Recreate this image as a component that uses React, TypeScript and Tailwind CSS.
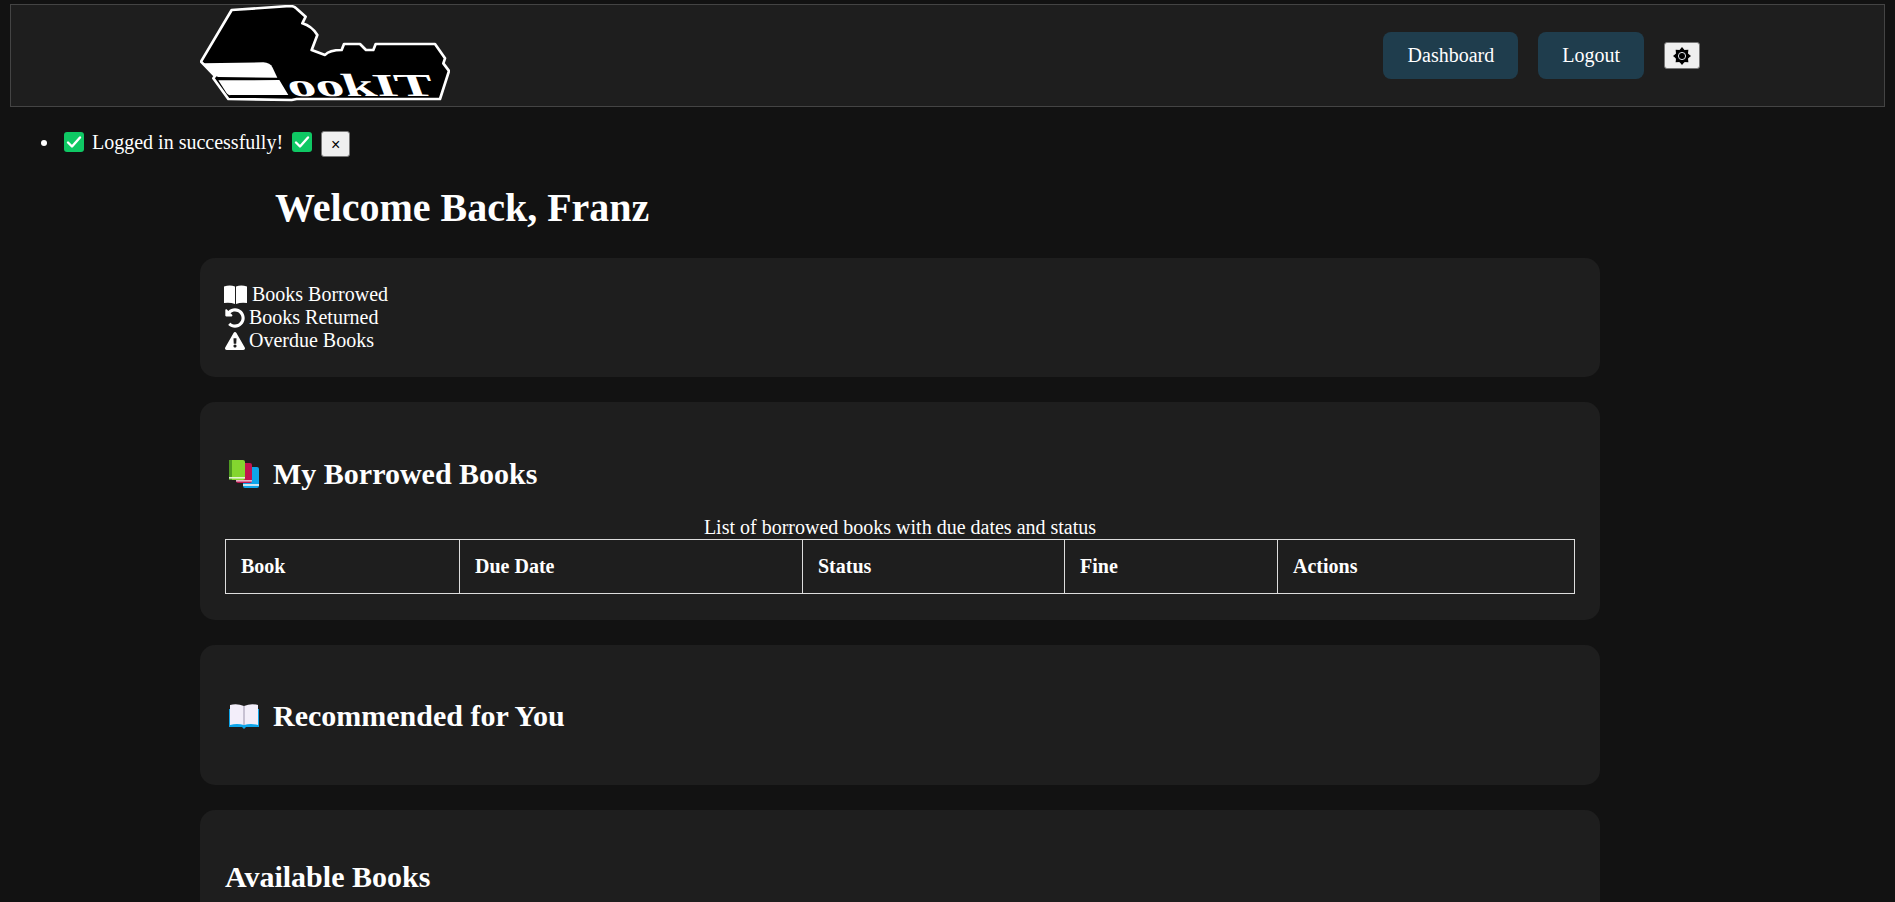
import { FaExclamationTriangle, FaUndoAlt } from 'react-icons/fa';

function CheckBadge() {
    return (
        <svg width="20" height="20" viewBox="0 0 20 20" className="shrink-0">
            <rect width="20" height="20" rx="3" fill="#0fc864" />
            <path d="M4 10.5l4 4 8-9" fill="none" stroke="#fff" strokeWidth="2.4" strokeLinecap="round" strokeLinejoin="round" />
        </svg>
    );
}

function Logo() {
    return (
        <svg width="250" height="97" viewBox="600 15 750 291" className="mb-[4px] shrink-0">
            <path
                d="M695 30L870 18Q882 18 890 26L917 50L907 70Q935 78 952 105L935 150L975 165Q988 150 1025 150L1032 132L1080 132L1098 150L1120 150L1127 132L1305 132L1335 175L1330 190L1347 213L1320 297L890 297L875 300L685 297L640 235L645 228L603 185Z"
                fill="#000"
                stroke="#fff"
                strokeWidth="8"
                strokeLinejoin="round"
            />
            <path d="M610 190L790 187Q810 188 818 203L832 233L655 231L640 226Z" fill="#fff" />
            <path d="M655 241L838 240L865 285L692 285Q685 287 680 280Z" fill="#fff" />
            <g transform="translate(872 288) skewX(20)">
                <text
                    x="0"
                    y="0"
                    fill="#fff"
                    fontFamily="'Liberation Serif', serif"
                    fontWeight="700"
                    fontSize="96"
                    textLength="440"
                    lengthAdjust="spacingAndGlyphs"
                >
                    ookIT
                </text>
            </g>
        </svg>
    );
}

function ThemeIcon() {
    const spikes = [0, 45, 90, 135, 180, 225, 270, 315];
    return (
        <svg width="18" height="18" viewBox="0 0 18 18">
            {spikes.map((angle) => (
                <path key={angle} d="M6.2 3.4L9 0L11.8 3.4Z" fill="#000" transform={`rotate(${angle} 9 9)`} />
            ))}
            <circle cx="9" cy="9" r="6.6" fill="#000" />
            <circle cx="9" cy="9" r="3.6" fill="#000" stroke="#dfe3ea" strokeWidth="1" />
        </svg>
    );
}

function BookIcon() {
    return (
        <svg width="23" height="19" viewBox="0 0 23 19" className="shrink-0">
            <path d="M0 1.5Q6-.5 11 1.5V19Q6 17 0 18Z" fill="#fff" />
            <path d="M23 1.5Q17-.5 12 1.5V19Q17 17 23 18Z" fill="#fff" />
        </svg>
    );
}

function BooksEmoji() {
    return (
        <svg width="30" height="28" viewBox="0 0 30 28" className="shrink-0">
            <rect x="14" y="7" width="16" height="21" rx="2" fill="#0ea5e9" />
            <rect x="14" y="24" width="16" height="2" fill="#cfe3ee" />
            <rect x="7" y="3" width="16" height="20" rx="2" fill="#c2134f" />
            <rect x="7" y="20" width="16" height="1.6" fill="#e5b7c8" />
            <rect x="0" y="0" width="16" height="20" rx="2" fill="#84d62f" />
            <rect x="0" y="0" width="3" height="20" fill="#4f9a22" />
            <rect x="0" y="17" width="16" height="1.6" fill="#e4f3d4" />
        </svg>
    );
}

function OpenBookEmoji() {
    return (
        <svg width="30" height="26" viewBox="0 0 30 26" className="shrink-0">
            <path d="M0 6h30v18H17l-2 2-2-2H0z" fill="#0ea5e9" />
            <path d="M1 2q7-2 14 1v19q-7-2-14 0z" fill="#f3eefa" />
            <path d="M29 2q-7-2-14 1v19q7-2 14 0z" fill="#f3eefa" />
            <path d="M15 3v19" stroke="#b9b2c6" strokeWidth="1.5" />
        </svg>
    );
}

export default function App() {
    return (
        <div className="h-screen overflow-hidden bg-[#121212] pt-[4px] font-['Liberation_Serif',serif] text-[20px] leading-[23px] text-white">
            <nav className="mx-[10px] flex h-[103px] items-center justify-between border border-[#444] bg-[#1e1e1e] pl-[189px] pr-[184px]">
                <Logo />
                <div className="flex items-center gap-5">
                    <a className="flex h-[47px] items-center rounded-lg bg-[#1f3d4d] pl-[25px] pr-6">Dashboard</a>
                    <a className="flex h-[47px] items-center rounded-lg bg-[#1f3d4d] px-6">Logout</a>
                    <button className="flex h-[27px] w-9 items-center justify-center rounded-[3px] border border-[#767676] bg-[#efefef] text-black">
                        <ThemeIcon />
                    </button>
                </div>
            </nav>

            <ul className="mt-[24px] pl-[41px]">
                <li className="flex h-[26px] items-start">
                    <span className="mr-[17px] mt-[9px] h-[6px] w-[6px] rounded-full bg-white" />
                    <span className="mt-[1px]">
                        <CheckBadge />
                    </span>
                    <span className="ml-2">Logged in successfully!</span>
                    <span className="ml-[9px] mt-[1px]">
                        <CheckBadge />
                    </span>
                    <button className="ml-[9px] flex h-[26px] w-[29px] items-center justify-center rounded-[3px] border border-[#767676] bg-[#efefef] font-['Liberation_Sans',sans-serif] text-[16px] text-black">
                        ×
                    </button>
                </li>
            </ul>

            <h1 className="ml-[275px] mt-[28px] text-[40px] font-bold leading-[46px]">Welcome Back, Franz</h1>

            <main className="ml-[200px] mt-[27px] flex w-[1400px] flex-col gap-[25px]">
                <section className="rounded-[15px] bg-[#1e1e1e] p-[25px]">
                    <div className="-ml-px flex items-center gap-[5px]">
                        <BookIcon />
                        Books Borrowed
                    </div>
                    <div className="flex items-center gap-[4px]">
                        <FaUndoAlt size={20} />
                        Books Returned
                    </div>
                    <div className="flex items-center gap-[4px]">
                        <FaExclamationTriangle size={20} />
                        Overdue Books
                    </div>
                </section>

                <section className="h-[218px] rounded-[15px] bg-[#1e1e1e] px-[25px] pt-[55px]">
                    <h2 className="flex h-[33px] items-center gap-[14px] pl-[4px] text-[30px] font-bold">
                        <BooksEmoji />
                        My Borrowed Books
                    </h2>
                    <table className="mt-[26px] w-[1349px] table-fixed border-collapse">
                        <caption className="h-[23px] text-center">List of borrowed books with due dates and status</caption>
                        <colgroup>
                            <col className="w-[234px]" />
                            <col className="w-[343px]" />
                            <col className="w-[262px]" />
                            <col className="w-[213px]" />
                            <col className="w-[297px]" />
                        </colgroup>
                        <thead>
                            <tr className="h-[54px]">
                                {['Book', 'Due Date', 'Status', 'Fine', 'Actions'].map((name) => (
                                    <th key={name} className="border border-[#ddd] px-[15px] text-left font-bold">
                                        {name}
                                    </th>
                                ))}
                            </tr>
                        </thead>
                    </table>
                </section>

                <section className="h-[140px] rounded-[15px] bg-[#1e1e1e] px-[25px] pt-[54px]">
                    <h2 className="flex h-[33px] items-center gap-[14px] pl-[4px] text-[30px] font-bold">
                        <OpenBookEmoji />
                        Recommended for You
                    </h2>
                </section>

                <section className="h-[300px] rounded-[15px] bg-[#1e1e1e] px-[25px] pt-[50px]">
                    <h2 className="h-[33px] text-[30px] font-bold leading-[33px]">Available Books</h2>
                </section>
            </main>
        </div>
    );
}
